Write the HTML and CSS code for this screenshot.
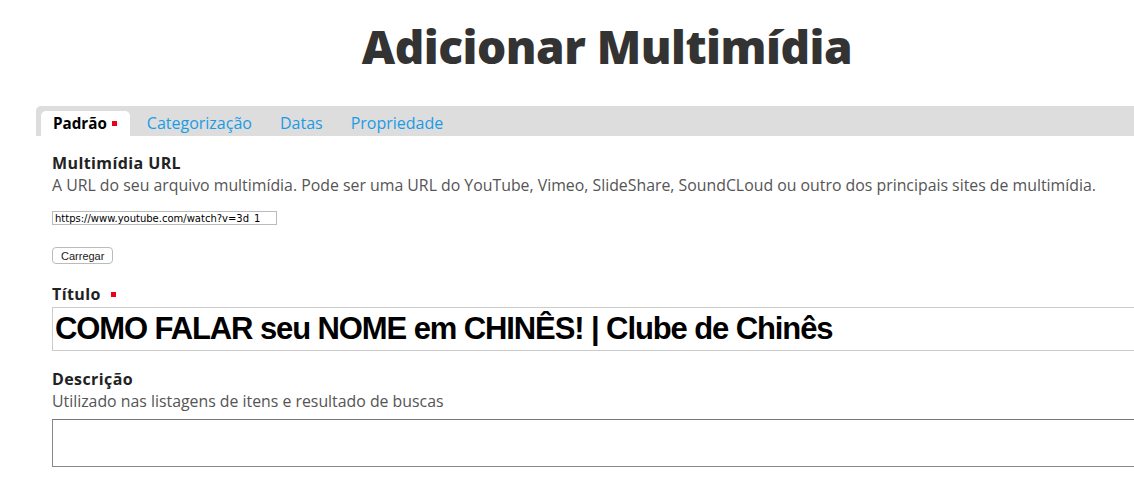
FILE: index.html
```html
<!DOCTYPE html>
<html lang="pt">
<head>
<meta charset="utf-8">
<title>Adicionar Multimídia</title>
<link rel="stylesheet" href="styles.css">
</head>
<body>
<div class="page">
  <h1 class="page-title">Adicionar Multimídia</h1>
  <div class="tabs">
    <div class="tab tab-active">Padrão <span class="req"></span></div>
    <div class="tab">Categorização</div>
    <div class="tab">Datas</div>
    <div class="tab">Propriedade</div>
  </div>
  <form class="form">
    <div class="field">
      <label class="label">Multimídia URL</label>
      <div class="help">A URL do seu arquivo multimídia. Pode ser uma URL do YouTube, Vimeo, SlideShare, SoundCLoud ou outro dos principais sites de multimídia.</div>
      <input class="url-input" type="text" value="https://www.youtube.com/watch?v=3d_1">
      <button class="btn" type="button">Carregar</button>
    </div>
    <div class="field">
      <label class="label">Título <span class="req req-label"></span></label>
      <input class="title-input" type="text" value="COMO FALAR seu NOME em CHINÊS! | Clube de Chinês">
    </div>
    <div class="field field-desc">
      <label class="label">Descrição</label>
      <div class="help">Utilizado nas listagens de itens e resultado de buscas</div>
      <textarea class="desc-input"></textarea>
    </div>
  </form>
</div>
</body>
</html>
```

FILE: styles.css
```css
html, body {
  margin: 0;
  padding: 0;
  background: #fff;
  overflow: hidden;
}
body {
  font-family: "Open Sans", "Lato", sans-serif;
  color: #333;
}
.page {
  padding: 0 0 0 36px;
}
.page-title {
  margin: 0;
  padding: 18px 0 0 44px;
  height: 106px;
  box-sizing: border-box;
  text-align: center;
  font-family: "Open Sans", sans-serif;
  font-weight: 800;
  font-size: 46px;
  line-height: 56px;
  letter-spacing: -0.5px;
  color: #333;
}
.tabs {
  display: flex;
  align-items: flex-end;
  background: #ddd;
  height: 30px;
  border-top-left-radius: 5px;
  padding-left: 5px;
  width: 1200px;
}
.tab {
  height: 25px;
  line-height: 25px;
  padding: 0 14px 0 12px;
  font-size: 16px;
  color: #1b9be5;
  display: flex;
  align-items: center;
  gap: 6px;
  margin-right: 2px;
}
.tab-active {
  background: #fff;
  color: #000;
  font-weight: 700;
  font-size: 15.2px;
  gap: 5px;
  padding-right: 13px;
  border-top-left-radius: 5px;
  border-top-right-radius: 5px;
  margin-right: 5px;
}
.req {
  display: inline-block;
  width: 5px;
  height: 5px;
  background: #e8001c;
}
.form {
  padding: 17px 0 0 16px;
}
.field {
  display: flex;
  flex-direction: column;
  align-items: flex-start;
}
.label {
  font-weight: 700;
  font-size: 16px;
  letter-spacing: 0.4px;
  line-height: 20px;
  color: #222;
  display: flex;
  align-items: center;
  gap: 10px;
}
.help {
  font-size: 15.85px;
  line-height: 24px;
  color: #555;
  font-weight: 400;
}
.url-input {
  margin-top: 14px;
  width: 225px;
  height: 14px;
  box-sizing: border-box;
  border: 1px solid #bbb;
  padding: 0 2px;
  font-family: "DejaVu Sans", sans-serif;
  font-size: 10px;
  color: #000;
}
.btn {
  margin-top: 22px;
  height: 17px;
  padding: 0 8px;
  font-family: "Liberation Sans", sans-serif;
  font-size: 11px;
  background: #fff;
  border: 1px solid #bbb;
  border-radius: 4px;
  color: #222;
}
.field + .field {
  margin-top: 20px;
}
.title-input {
  margin-top: 3px;
  width: 1100px;
  height: 44px;
  box-sizing: border-box;
  border: 1px solid #ccc;
  padding: 0 2px;
  font-family: "Liberation Sans", Arial, sans-serif;
  font-weight: 700;
  font-size: 31px;
  color: #000;
  letter-spacing: -1.1px;
}
.field.field-desc {
  margin-top: 18px;
}
.desc-input {
  margin-top: 6px;
  width: 1100px;
  height: 48px;
  box-sizing: border-box;
  border: 1px solid #888;
  border-top-color: #777;
  resize: none;
}
```
